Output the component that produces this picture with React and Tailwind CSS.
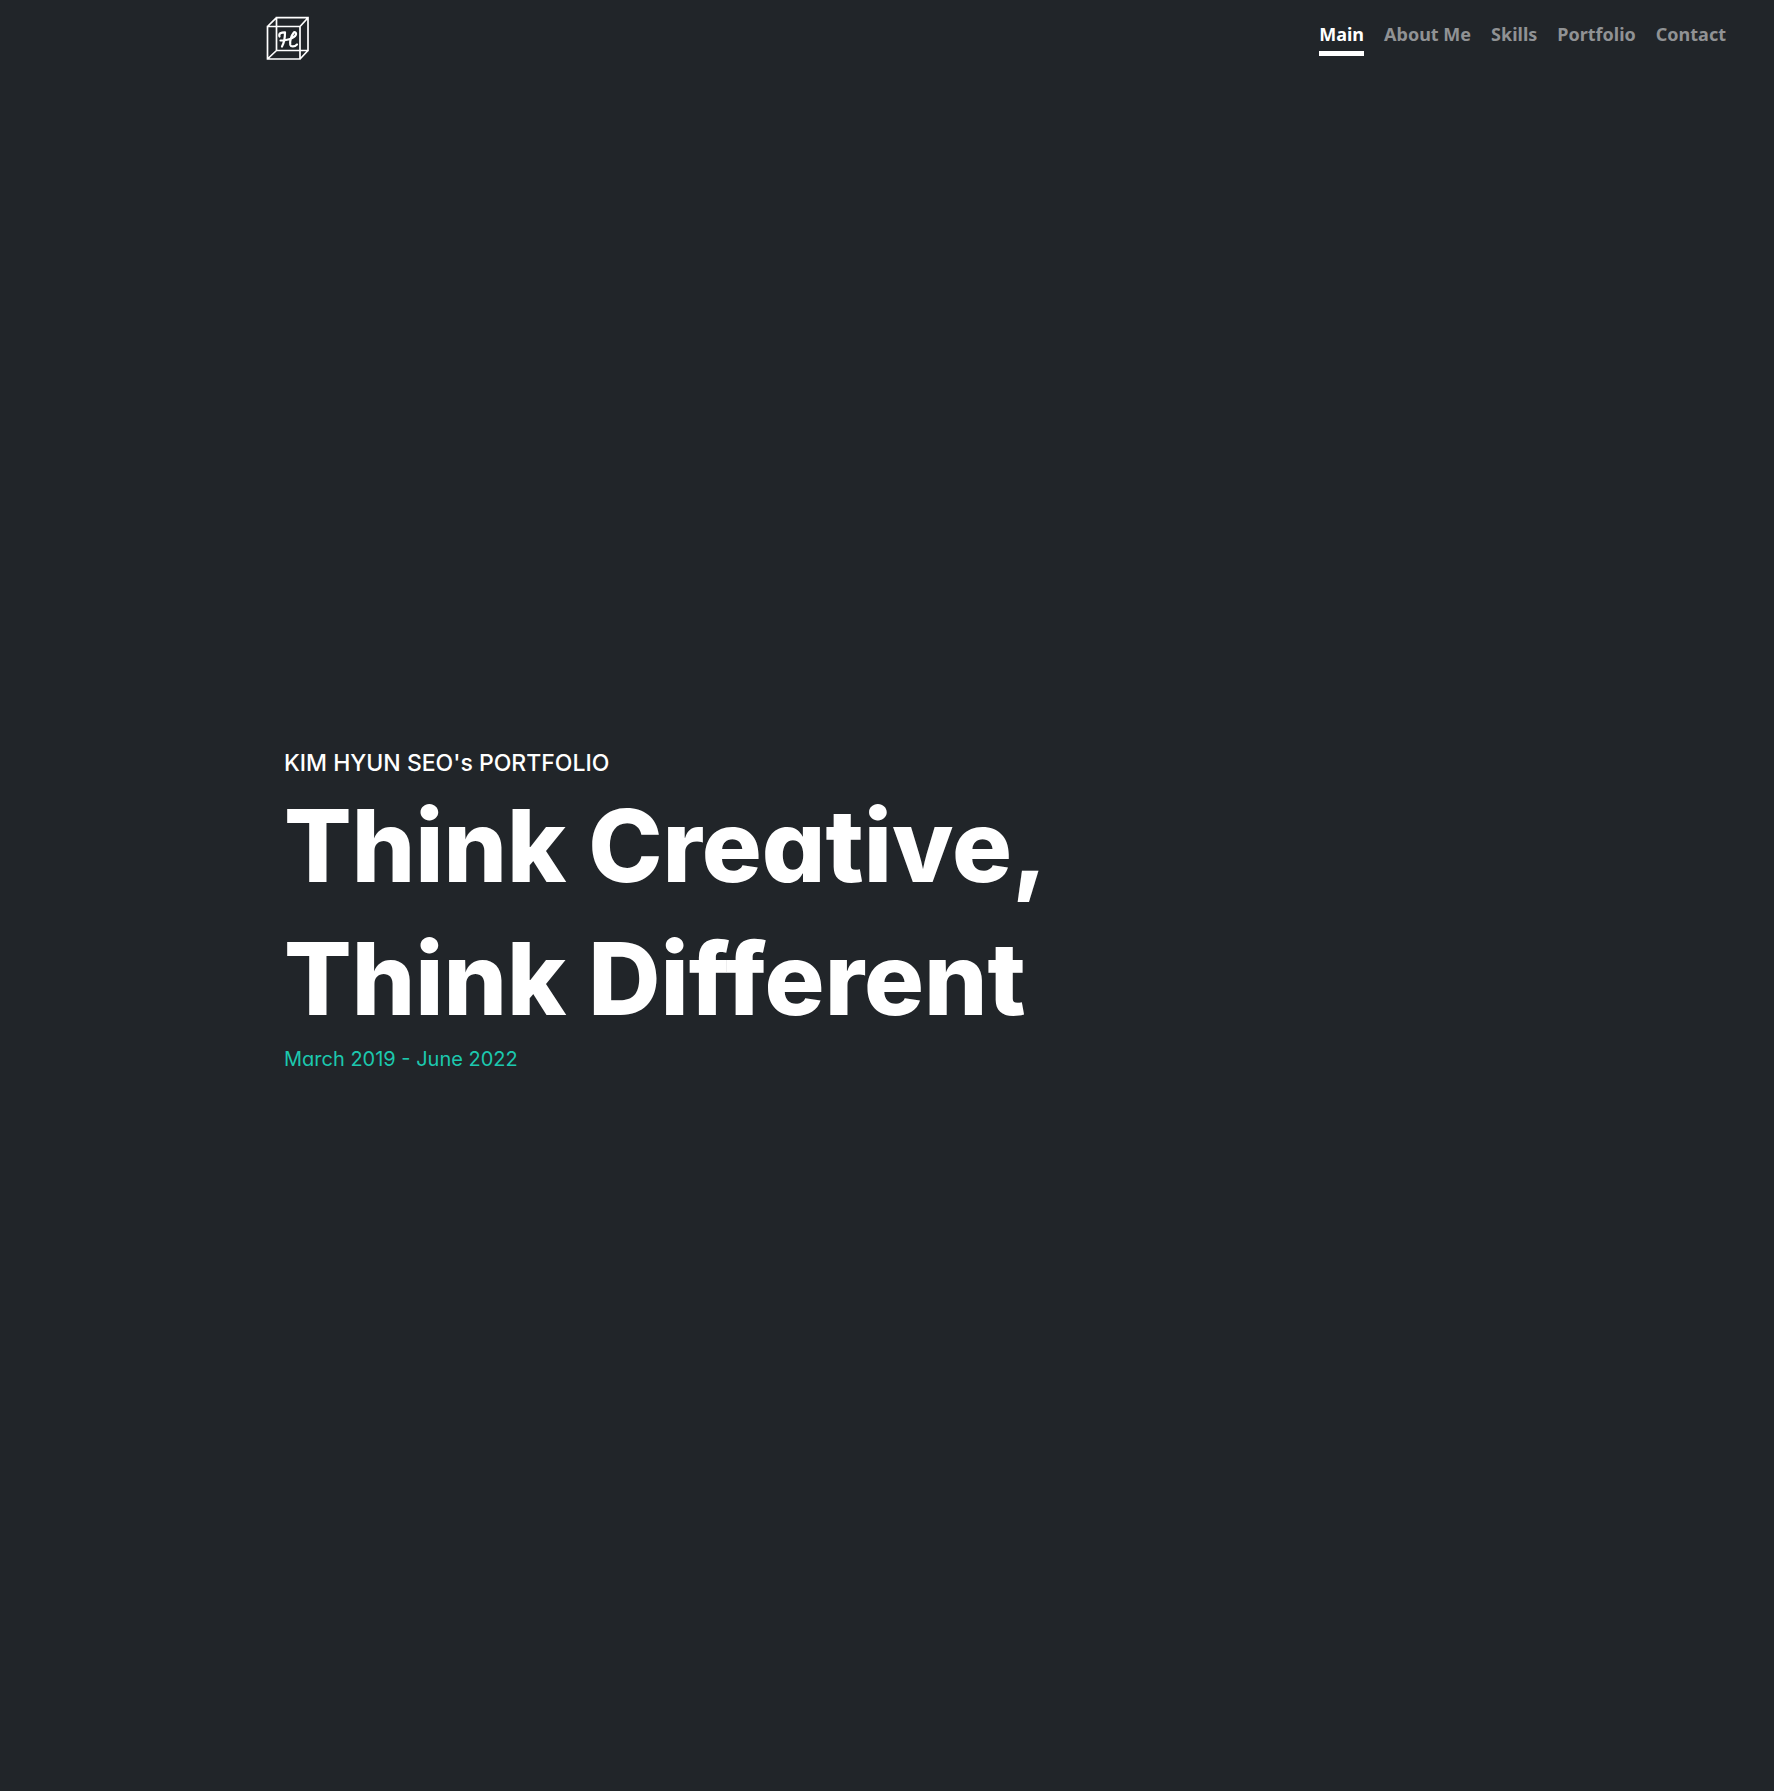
const links = [
  { label: "Main", href: "#main" },
  { label: "About Me", href: "#about" },
  { label: "Skills", href: "#skills" },
  { label: "Portfolio", href: "#portfolio" },
  { label: "Contact", href: "#contact" },
];

function Logo() {
  return (
    <svg viewBox="0 0 44 44" className="size-11" fill="none" stroke="white" aria-hidden="true">
      <path
        strokeWidth="1.7"
        d="M1.500 10.500H34V43H1.500ZM10.500 1.700H42V34.500H10.500ZM1.500 10.500L10.500 1.700M34 10.500L42 1.700M34 43L42 34.500M1.500 43L10.500 34.500"
      />
      <path
        strokeWidth="2.2"
        strokeLinecap="round"
        strokeLinejoin="round"
        d="M13.500 20.500C12.500 17.500 15 16.300 19 16.300C19 20 18 27 16 30.500M28 16.300C25 20 23.500 26 24.300 29C25 31 28.500 31 31 28.500M14.500 24.500C19 24.500 28 23 30 18.500C30.500 16.500 29 16 28 16.300"
      />
    </svg>
  );
}

export default function App() {
  return (
    <div className="flex min-h-screen flex-col bg-[#212529] font-[Inter,sans-serif] text-white">
      <header className="flex items-start justify-between pt-4 pr-12 pl-[15%]">
        <a href="#main" aria-label="Home"><Logo /></a>
        <nav className="flex gap-5 pt-1 font-['Noto_Sans',sans-serif] text-lg leading-7 font-bold">
          {links.map(({ label, href }, i) => (
            <a
              key={label}
              href={href}
              className={i === 0 ? "border-b-5 border-white pb-[3px]" : "text-[#909294]"}
            >
              {label}
            </a>
          ))}
        </nav>
      </header>
      <main className="flex grow flex-col justify-center pb-8 pl-71 [font-feature-settings:'cv11']">
        <p className="text-[23px] leading-8 font-medium">KIM HYUN SEO's PORTFOLIO</p>
        <h1 className="text-[100px] leading-[133px] font-extrabold">Think Creative,<br />Think Different</h1>
        <p className="text-xl text-[#1cc8ae]">March 2019 - June 2022</p>
      </main>
    </div>
  );
}
